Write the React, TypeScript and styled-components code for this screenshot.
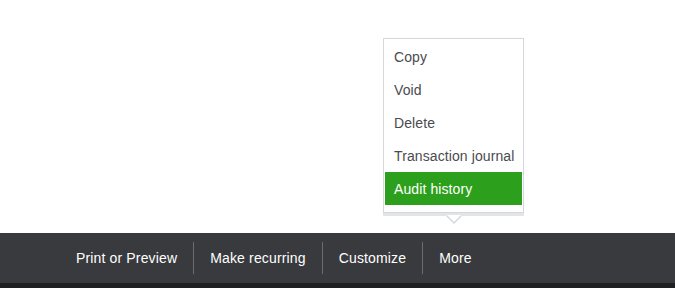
import styled, { createGlobalStyle } from 'styled-components';

const GlobalStyle = createGlobalStyle`
  html, body {
    margin: 0;
    padding: 0;
    background: #ffffff;
  }
  body {
    font-family: 'Liberation Sans', Arial, sans-serif;
  }
`;

const Page = styled.div`
  display: flex;
  flex-direction: column;
  width: 675px;
  height: 288px;
  overflow: hidden;
`;

const Content = styled.div`
  position: relative;
  flex: 1;
`;

const Menu = styled.div`
  position: absolute;
  left: 383px;
  top: 38px;
  width: 137px;
  display: flex;
  flex-direction: column;
  padding: 1px 1px 7px;
  background: #ffffff;
  border: 1px solid #d4d7dc;
  box-shadow: 0 3px 0 #e3e4e6;
`;

const Arrow = styled.div`
  position: absolute;
  left: 62px;
  bottom: -12px;
  width: 0;
  height: 0;
  border-left: 8px solid transparent;
  border-right: 8px solid transparent;
  border-top: 8px solid #d4d7dc;

  &::after {
    content: '';
    position: absolute;
    left: -7px;
    top: -9px;
    border-left: 7px solid transparent;
    border-right: 7px solid transparent;
    border-top: 7px solid #ffffff;
  }
`;

const MenuItem = styled.div<{ $active?: boolean }>`
  height: 33px;
  display: flex;
  align-items: center;
  padding-left: 9px;
  font-size: 14px;
  letter-spacing: 0.1px;
  white-space: nowrap;
  color: ${(p) => (p.$active ? '#ffffff' : '#4a4b50')};
  background: ${(p) => (p.$active ? '#2ca01c' : 'transparent')};
`;

const Toolbar = styled.div`
  height: 50px;
  display: flex;
  align-items: center;
  padding-left: 60px;
  background: #393a3d;
  border-bottom: 5px solid #1f2022;
`;

const ToolbarButton = styled.div<{ $first?: boolean }>`
  height: 32px;
  display: flex;
  align-items: center;
  padding: 0 16px;
  font-size: 14px;
  letter-spacing: 0.15px;
  color: #ffffff;
  border-left: ${(p) => (p.$first ? 'none' : '1px solid #6b6c72')};
`;

const menuItems = ['Copy', 'Void', 'Delete', 'Transaction journal', 'Audit history'];
const toolbarItems = ['Print or Preview', 'Make recurring', 'Customize', 'More'];

export default function App() {
  return (
    <Page>
      <GlobalStyle />
      <Content>
        <Menu>
          {menuItems.map((item) => (
            <MenuItem key={item} $active={item === 'Audit history'}>
              {item}
            </MenuItem>
          ))}
          <Arrow />
        </Menu>
      </Content>
      <Toolbar>
        {toolbarItems.map((item, i) => (
          <ToolbarButton key={item} $first={i === 0}>
            {item}
          </ToolbarButton>
        ))}
      </Toolbar>
    </Page>
  );
}
